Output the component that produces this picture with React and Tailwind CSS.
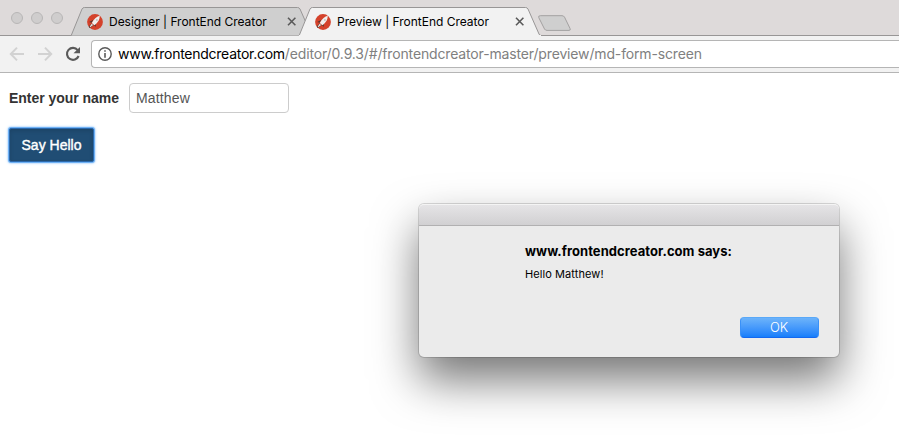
function Rocket() {
  return (
    <svg className="size-4 shrink-0" viewBox="0 0 16 16">
      <circle cx="8" cy="8" r="7.9" fill="#d4422b" />
      <path d="M2.2 8 L6.4 5.8 L4.6 8.8 Z M8.8 9.6 L8.8 12.8 L6.8 11.2 Z M4.6 9.4 L6.6 11.3 L2.8 14 L1.6 12.6 Z" fill="#54352e" />
      <path d="M12.8 1.8 C9.8 2.6 7.2 4.8 4.8 8.9 L7.5 11.2 C11.3 8.4 12.8 5.4 12.8 1.8 Z" fill="#f1efed" />
      <path d="M4.6 9.8 L6.2 11.1 L3.2 13.2 L2.7 12.4 Z" fill="#e8e0dc" />
      <circle cx="9.9" cy="6" r="0.8" fill="#a8a3a0" />
    </svg>
  );
}

function Close() {
  return (
    <svg className="size-[9px] shrink-0" viewBox="0 0 9 9" fill="none" stroke="#5a5a5a" strokeWidth="1.6">
      <path d="M1 0.8 L8.4 8.2 M8.4 0.8 L1 8.2" />
    </svg>
  );
}

function Tab({ title, active }) {
  return (
    <div className={`relative flex h-[29px] w-[228px] items-center pl-4 ${active ? "z-10" : ""}`}>
      <svg className="absolute top-0 left-0 h-[29px] w-[243px]" viewBox="0 0 243 29" fill={active ? "#f2f2f2" : "#cfcfcf"}>
        <path d="M0.2 28.5 L11 2 Q11.8 0.5 13.4 0.5 L226.5 0.5 Q228.2 0.5 229 2 L240 27 Q240.6 28.5 242 28.5" stroke="#989696" />
        {active && <path d="M0 28.5 H242" stroke="#f2f2f2" />}
      </svg>
      <div className="relative flex w-[209px] items-center">
        <Rocket />
        <span className="ml-[6px] w-[179px] text-[12px] leading-4 tracking-[-0.02px] whitespace-nowrap text-black">{title}</span>
        <Close />
      </div>
    </div>
  );
}

export default function App() {
  return (
    <div className="flex h-[445px] w-[899px] flex-col overflow-hidden bg-white font-['Inter','Liberation_Sans',sans-serif]">
      <header className="shrink-0">
        <div className="flex h-9 items-end border-b border-[#989696] bg-[#dedada]">
          <div className="flex h-full w-[71px] items-center gap-2 pl-[11px]">
            <i className="size-3 rounded-full border border-[#b8b6b6] bg-[#cfcdcd]" />
            <i className="size-3 rounded-full border border-[#b8b6b6] bg-[#cfcdcd]" />
            <i className="size-3 rounded-full border border-[#b8b6b6] bg-[#cfcdcd]" />
          </div>
          <nav className="-mb-px flex">
            <Tab title="Designer | FrontEnd Creator" />
            <Tab title="Preview | FrontEnd Creator" active />
          </nav>
          <svg className="mb-[3px] ml-[10px] h-[17px] w-[35px]" viewBox="0 0 35 17">
            <path d="M3.3 0.7 H25 Q26.8 0.7 27.5 2.1 L33 13.4 Q34 15.4 32 15.4 H10 Q8.3 15.4 7.5 14 L1.8 2.7 Q1 0.7 3.3 0.7 Z" fill="#cfcfcf" stroke="#a3a1a1" />
          </svg>
        </div>
        <div className="flex h-[37px] items-center border-b border-[#b5b5b5] bg-[#f2f2f2] pl-[9px]">
          <svg className="h-4 w-[18px]" viewBox="0 0 18 16" fill="none" stroke="#d2d2d2" strokeWidth="2">
            <path d="M15 8 H2 M8 1.6 L1.8 8 L8 14.4" />
          </svg>
          <svg className="ml-[10px] h-4 w-[18px]" viewBox="0 0 18 16" fill="none" stroke="#d2d2d2" strokeWidth="2">
            <path d="M1 8 H14 M8 1.6 L14.2 8 L8 14.4" />
          </svg>
          <svg className="ml-[9px] h-4 w-[18px]" viewBox="0 0 18 16">
            <path d="M13.7 4.1 A6 6 0 1 0 14.6 10" fill="none" stroke="#5a5a5a" strokeWidth="2.1" />
            <path d="M16 1 V7.2 H9.5 Z" fill="#5a5a5a" />
          </svg>
          <div className="ml-[9px] flex h-7 flex-1 items-center rounded-l-[4px] border border-r-0 border-[#b5b5b5] bg-white pl-[6px]">
            <svg className="size-[14px]" viewBox="0 0 14 14">
              <circle cx="7" cy="7" r="6.2" fill="none" stroke="#5a5a5a" strokeWidth="1.4" />
              <path d="M6.2 3.2 H7.8 V4.8 H6.2 Z M6.2 6 H7.8 V10.8 H6.2 Z" fill="#5a5a5a" />
            </svg>
            <span className="ml-[6px] text-[14px] leading-5 tracking-[-0.15px] whitespace-nowrap text-[#808080]">
              <span className="tracking-[-0.26px] text-black">www.frontendcreator.com</span>/editor/0.9.3/#/frontendcreator-master/preview/md-form-screen
            </span>
          </div>
        </div>
      </header>
      <main className="px-[9px] pt-[10px] font-['Liberation_Sans',Arial,sans-serif]">
        <div className="flex items-center">
          <label htmlFor="name" className="w-[120px] text-[14px] font-bold tracking-[-0.03px] whitespace-nowrap text-[#333]">Enter your name</label>
          <input id="name" defaultValue="Matthew" className="h-[30px] w-40 rounded-[4px] border border-[#ccc] bg-white px-[6px] text-[14px] tracking-[0.15px] text-[#555] outline-none" />
        </div>
        <button className="mt-[15px] h-[34px] w-[85px] rounded-[2px] border border-[#2b69ad] bg-[#204d74] text-[14px] text-white shadow-[0_0_1px_1px_#66adf5,0_0_3px_1px_#a5d0fb,inset_0_2px_4px_rgba(0,0,0,0.12)] [-webkit-text-stroke:0.4px_white]">Say Hello</button>
      </main>
      <section role="dialog" className="absolute top-[204px] left-[419px] flex h-[153px] w-[420px] flex-col overflow-visible rounded-[5px] bg-[#ebebeb] shadow-[0_0_0_1px_rgba(0,0,0,0.14),0_23px_46px_rgba(0,0,0,0.54)]">
        <div className="h-[22px] shrink-0 rounded-t-[5px] border-t border-b border-t-[#f4f4f4] border-b-[#b1b0b1] bg-linear-to-b from-[#e5e4e6] to-[#d1d0d2]" />
        <div className="pt-[16px] pl-[106px]">
          <h1 className="text-[13px] leading-[18px] font-bold tracking-[0.05px] whitespace-nowrap text-black">www.frontendcreator.com says:</h1>
          <p className="mt-[6px] text-[11px] leading-4 tracking-[0.08px] whitespace-nowrap text-black">Hello Matthew!</p>
        </div>
        <button className="mt-auto mr-[20px] mb-[19px] h-[21px] w-[79px] self-end rounded-[4px] border border-t-[#5aa9f8] border-x-[#3a91f8] border-b-[#1468f0] bg-linear-to-b from-[#6cb3fa] to-[#157efb] pr-px text-[13px] leading-[19px] font-light tracking-[-0.2px] text-white">OK</button>
      </section>
    </div>
  );
}
